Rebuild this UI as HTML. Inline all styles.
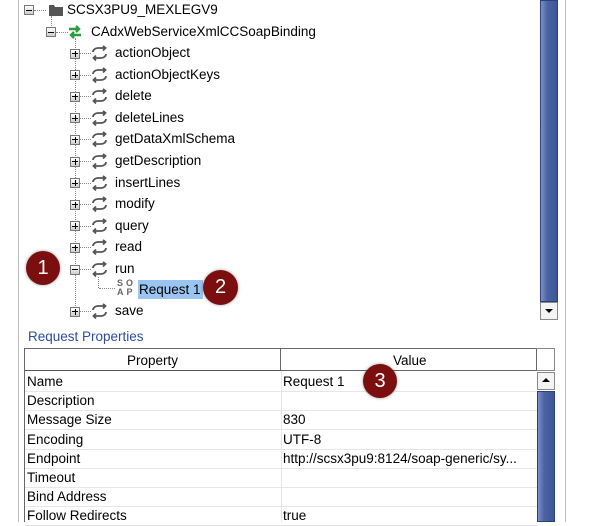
<!DOCTYPE html>
<html><head><style>
body{margin:0;width:606px;height:522px;background:#fff;position:relative;overflow:hidden;font-family:"Liberation Sans",sans-serif;font-size:13.5px;color:#000}
.a{position:absolute}
.exp{position:absolute;width:8px;height:8px;border:1px solid #777;background:linear-gradient(#fff,#ccc);}
.exp:before{content:"";position:absolute;left:1px;top:3.5px;width:6px;height:1px;background:#000}
.exp.p:after{content:"";position:absolute;left:3.5px;top:1px;width:1px;height:6px;background:#000}
.dh{position:absolute;border-top:1px dotted #888;height:0}
.dv{position:absolute;border-left:1px dotted #888;width:0}
.t{position:absolute;white-space:nowrap;line-height:16px}
.c{position:absolute;border-radius:50%;background:#7b0f0f;color:#fff;font-size:20px;text-align:center;box-shadow:0 0 3px rgba(0,0,0,.4)}
.row{position:absolute;left:25px;width:512px;height:19px;border-bottom:1px solid #e6e6e6}
.row span{position:absolute;top:2px}
</style></head><body>
<div class="a" style="left:18px;top:0;width:1px;height:522px;background:#bbb"></div>
<div class="a" style="left:565px;top:0;width:1px;height:522px;background:#bbb"></div>
<div class="exp" style="left:24px;top:5px"></div>
<div class="dh" style="left:34px;top:10px;width:12px"></div>
<svg class="a" style="left:48px;top:3px" width="16" height="14"><path d="M1 2h5l1 2h8v9H1z" fill="#555"/></svg>
<div class="t" style="left:67px;top:2px">SCSX3PU9_MEXLEGV9</div>
<div class="dv" style="left:51px;top:16px;height:10px"></div>
<div class="exp" style="left:46px;top:27px"></div>
<div class="dh" style="left:56px;top:32px;width:12px"></div>
<svg class="a" style="left:68px;top:24px" width="14" height="16"><path d="M1 5h10M8 2l3 3-3 3M13 11H3M6 8l-3 3 3 3" stroke="#2a9d3a" stroke-width="2.4" fill="none"/></svg>
<div class="t" style="left:91px;top:24px">CAdxWebServiceXmlCCSoapBinding</div>
<div class="dv" style="left:75px;top:38px;height:274px"></div>
<div id="tree"></div>
<div class="dv" style="left:98px;top:277px;height:11px"></div>
<div class="dh" style="left:99px;top:288px;width:16px"></div>
<div class="a" style="left:117px;top:279px;font-size:9px;line-height:9px;color:#666;letter-spacing:3px;font-weight:bold">SO<br>AP</div>
<div class="a" style="left:138px;top:280px;width:65px;height:19px;background:#99c5f0"></div>
<div class="t" style="left:139px;top:282px">Request 1</div>
<div class="a" style="left:540px;top:0;width:18px;height:302px;background:linear-gradient(90deg,#7b8fc4,#4a63a5 40%,#3d5596);border:1px solid #2c3f78;box-sizing:border-box"></div>
<div class="a" style="left:540px;top:302px;width:18px;height:18px;border:1px solid #888;box-sizing:border-box;background:#f4f4f4"></div>
<div class="a" style="left:545px;top:309px;border-left:4px solid transparent;border-right:4px solid transparent;border-top:4px solid #000"></div>
<div class="t" style="left:28px;top:329px;color:#2c4da0">Request Properties</div>
<div class="a" style="left:24px;top:348px;width:531px;height:174px;border-left:1px solid #666"></div>
<div class="a" style="left:25px;top:348px;width:256px;height:23px;border:1px solid #666;box-sizing:border-box;border-left:0;border-bottom:1px solid #555"></div>
<div class="a" style="left:281px;top:348px;width:256px;height:23px;border:1px solid #666;border-left:0;box-sizing:border-box"></div>
<div class="a" style="left:536px;top:348px;width:19px;height:23px;border:1px solid #888;border-left:0;box-sizing:border-box"></div>
<div class="t" style="left:127px;top:353px">Property</div>
<div class="t" style="left:393px;top:353px">Value</div>
<div class="a" style="left:281px;top:371px;width:1px;height:151px;background:#e6e6e6"></div>
<div id="rows"></div>
<div class="a" style="left:537px;top:372px;width:18px;height:18px;border:1px solid #888;box-sizing:border-box;background:#f4f4f4"></div>
<div class="a" style="left:542px;top:378px;border-left:4px solid transparent;border-right:4px solid transparent;border-bottom:4px solid #000"></div>
<div class="a" style="left:537px;top:391px;width:18px;height:131px;background:linear-gradient(90deg,#7b8fc4,#4a63a5 40%,#3d5596);border:1px solid #2c3f78;box-sizing:border-box"></div>
<div class="c" style="left:26px;top:251px;width:34px;height:34px;line-height:34px">1</div>
<div class="c" style="left:203px;top:270px;width:35px;height:35px;line-height:35px">2</div>
<div class="c" style="left:363px;top:364px;width:34px;height:34px;line-height:34px">3</div>
<script>
var names=["actionObject","actionObjectKeys","delete","deleteLines","getDataXmlSchema","getDescription","insertLines","modify","query","read","run","save"];
var h="";
names.forEach(function(n,i){var y=53+i*21.6;if(n=="save")y=311;
h+='<div class="exp '+(n=="run"?"":"p")+'" style="left:70px;top:'+(y-4.5)+'px"></div>';
h+='<div class="dh" style="left:80px;top:'+y+'px;width:11px"></div>';
h+='<svg class="a" style="left:91px;top:'+(y-8)+'px" width="17" height="16"><path d="M2 7a5 4 0 0 1 5-4h7M12 1l2.5 2-2.5 2.5M15 9a5 4 0 0 1-5 4H3M5 10.5l-2.5 2.5 2.5 2.5" stroke="#555" stroke-width="1.8" fill="none"/></svg>';
h+='<div class="t" style="left:115px;top:'+(y-8)+'px">'+n+'</div>';});
document.getElementById("tree").innerHTML=h;
var r=[["Name","Request 1"],["Description",""],["Message Size","830"],["Encoding","UTF-8"],["Endpoint","http://scsx3pu9:8124/soap-generic/sy..."],["Timeout",""],["Bind Address",""],["Follow Redirects","true"]];
var s="";r.forEach(function(x,i){s+='<div class="row" style="top:'+(372+i*19.2)+'px"><span style="left:2px">'+x[0]+'</span><span style="left:258px">'+x[1]+'</span></div>';});
document.getElementById("rows").innerHTML=s;
</script>
</body></html>
